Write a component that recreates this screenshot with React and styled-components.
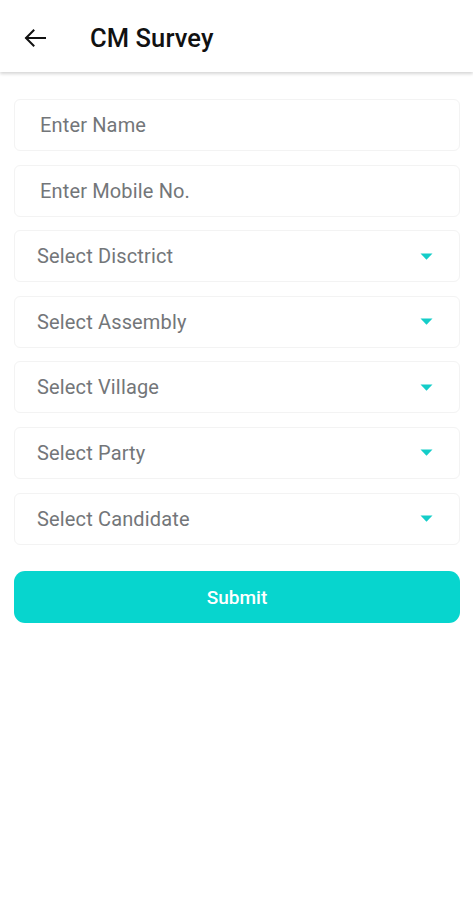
import React from "react";
import styled, { createGlobalStyle } from "styled-components";

const GlobalStyle = createGlobalStyle`
  body {
    margin: 0;
    background: #ffffff;
    font-family: Roboto, "Liberation Sans", sans-serif;
  }
`;

const fields = [
  { label: "Enter Name", type: "input" },
  { label: "Enter Mobile No.", type: "input" },
  { label: "Select Disctrict", type: "select" },
  { label: "Select Assembly", type: "select" },
  { label: "Select Village", type: "select" },
  { label: "Select Party", type: "select" },
  { label: "Select Candidate", type: "select" }
];

const BackArrow = () => (
  <svg width="22" height="18" viewBox="0 0 22 18" fill="none">
    <path
      d="M21 9H2.2M9.5 1.5L2 9l7.5 7.5"
      stroke="#111"
      strokeWidth="2"
      strokeLinecap="square"
    />
  </svg>
);

const Caret = () => (
  <svg width="13" height="7" viewBox="0 0 13 7">
    <path d="M0.5 0.5h12L6.5 6.8z" fill="#14cdc8" />
  </svg>
);

const App = () => (
  <Page>
    <GlobalStyle />
    <Header>
      <BackButton>
        <BackArrow />
      </BackButton>
      <Title>CM Survey</Title>
    </Header>
    <Form>
      {fields.map(f => (
        <Field key={f.label} select={f.type === "select"}>
          <Placeholder>{f.label}</Placeholder>
          {f.type === "select" && <Caret />}
        </Field>
      ))}
      <SubmitButton>Submit</SubmitButton>
    </Form>
  </Page>
);

const Page = styled.div`
  width: 473px;
  min-height: 900px;
  background: #fff;
`;

const Header = styled.div`
  height: 72px;
  box-sizing: border-box;
  padding: 4px 0 0 24px;
  display: flex;
  align-items: center;
  background: #fff;
  box-shadow: 0 2px 3px rgba(0, 0, 0, 0.16);
  position: relative;
`;

const BackButton = styled.div`
  display: flex;
  align-items: center;
  width: 66px;
  height: 24px;
`;

const Title = styled.h1`
  margin: 0;
  font-size: 25.5px;
  font-weight: 500;
  color: #111;
  letter-spacing: 0.1px;
`;

const Form = styled.div`
  display: flex;
  flex-direction: column;
  gap: 13.6px;
  padding: 27px 13px 0 14px;
`;

const Field = styled.div`
  height: 52px;
  box-sizing: border-box;
  display: flex;
  align-items: center;
  justify-content: space-between;
  padding: 0 26px 0 ${p => (p.select ? "22px" : "25px")};
  border: 1px solid #f3f3f3;
  border-radius: 6px;
  background: #fff;
`;

const Placeholder = styled.span`
  font-size: 20px;
  color: #737679;
  letter-spacing: 0.15px;
`;

const SubmitButton = styled.button`
  margin-top: 13px;
  height: 52px;
  border: none;
  border-radius: 11px;
  background: #07d5ce;
  color: #fff;
  font-family: Roboto, "Liberation Sans", sans-serif;
  font-size: 19px;
  font-weight: 500;
`;

export default App;
